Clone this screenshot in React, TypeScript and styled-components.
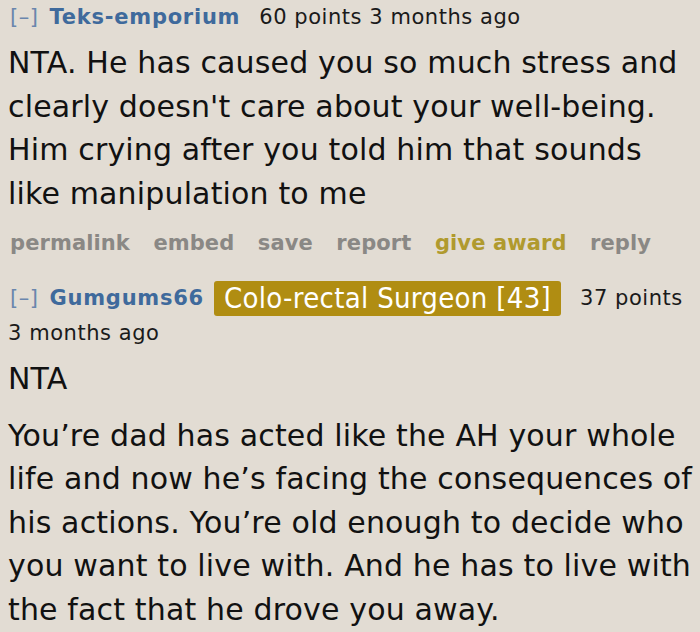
import React from "react";
import styled, { createGlobalStyle } from "styled-components";

const Global = createGlobalStyle`
  html, body { margin: 0; padding: 0; background: #e2dcd3; }
  body { font-family: "DejaVu Sans", Verdana, sans-serif; color: #111; }
`;

const Page = styled.div`
  width: 700px;
  height: 632px;
  overflow: hidden;
  background: #e2dcd3;
  padding: 0 0 0 8px;
  box-sizing: border-box;
`;

const Comment = styled.div<{ $first?: boolean }>`
  display: flex;
  flex-direction: column;
  margin-top: ${(p) => (p.$first ? "0" : "14px")};
`;

const Tagline = styled.div`
  display: flex;
  flex-wrap: wrap;
  align-items: center;
  column-gap: 19px;
  font-size: 21px;
  letter-spacing: 0.55px;
  line-height: 35px;
  color: #1a1a1a;
  white-space: nowrap;
`;

const Expand = styled.span`
  color: #6a86ad;
  margin-left: 2px;
`;

const Author = styled.a`
  color: #3f6a9c;
  font-weight: bold;
  letter-spacing: 0.75px;
  text-decoration: none;
  margin-left: 11px;
`;

const Flair = styled.span`
  background: #b08d12;
  color: #fff;
  border-radius: 3px;
  padding: 0 10px;
  font-size: 29px;
  letter-spacing: 0.3px;
  line-height: 35px;
  font-family: "DejaVu Sans Condensed", "DejaVu Sans", sans-serif;
  margin: 0 0 0 -9px;
`;

const Body = styled.div`
  font-size: 30px;
  letter-spacing: 0.15px;
  line-height: 43.5px;
  color: #111;
  margin-top: 6px;
`;

const Para = styled.p`
  margin: 0 0 13.5px;
`;

const Line = styled.span`
  display: block;
  white-space: nowrap;
`;

const Actions = styled.ul`
  display: flex;
  gap: 23.5px;
  list-style: none;
  margin: -10px 0 0;
  padding: 0 0 0 2px;
  font-size: 21px;
  letter-spacing: 0.1px;
  font-weight: bold;
  line-height: 48px;
`;

const Action = styled.li<{ $gold?: boolean }>`
  color: ${(p) => (p.$gold ? "#b09a2e" : "#8a8885")};
`;

const lines1 = [
  "NTA. He has caused you so much stress and",
  "clearly doesn't care about your well-being.",
  "Him crying after you told him that sounds",
  "like manipulation to me",
];

const lines2 = [
  "You’re dad has acted like the AH your whole",
  "life and now he’s facing the consequences of",
  "his actions. You’re old enough to decide who",
  "you want to live with. And he has to live with",
  "the fact that he drove you away.",
];

export default function App() {
  return (
    <Page>
      <Global />
      <Comment $first>
        <Tagline>
          <span>
            <Expand>[–]</Expand>
            <Author>Teks-emporium</Author>
          </span>
          <span>60 points 3 months ago</span>
        </Tagline>
        <Body>
          <Para>
            {lines1.map((l) => (
              <Line key={l}>{l}</Line>
            ))}
          </Para>
        </Body>
        <Actions>
          <Action>permalink</Action>
          <Action>embed</Action>
          <Action>save</Action>
          <Action>report</Action>
          <Action $gold>give award</Action>
          <Action>reply</Action>
        </Actions>
      </Comment>
      <Comment>
        <Tagline>
          <span>
            <Expand>[–]</Expand>
            <Author>Gumgums66</Author>
          </span>
          <Flair>Colo-rectal Surgeon [43]</Flair>
          <span>37 points</span>
          <span>3 months ago</span>
        </Tagline>
        <Body>
          <Para>NTA</Para>
          <Para>
            {lines2.map((l) => (
              <Line key={l}>{l}</Line>
            ))}
          </Para>
        </Body>
      </Comment>
    </Page>
  );
}
